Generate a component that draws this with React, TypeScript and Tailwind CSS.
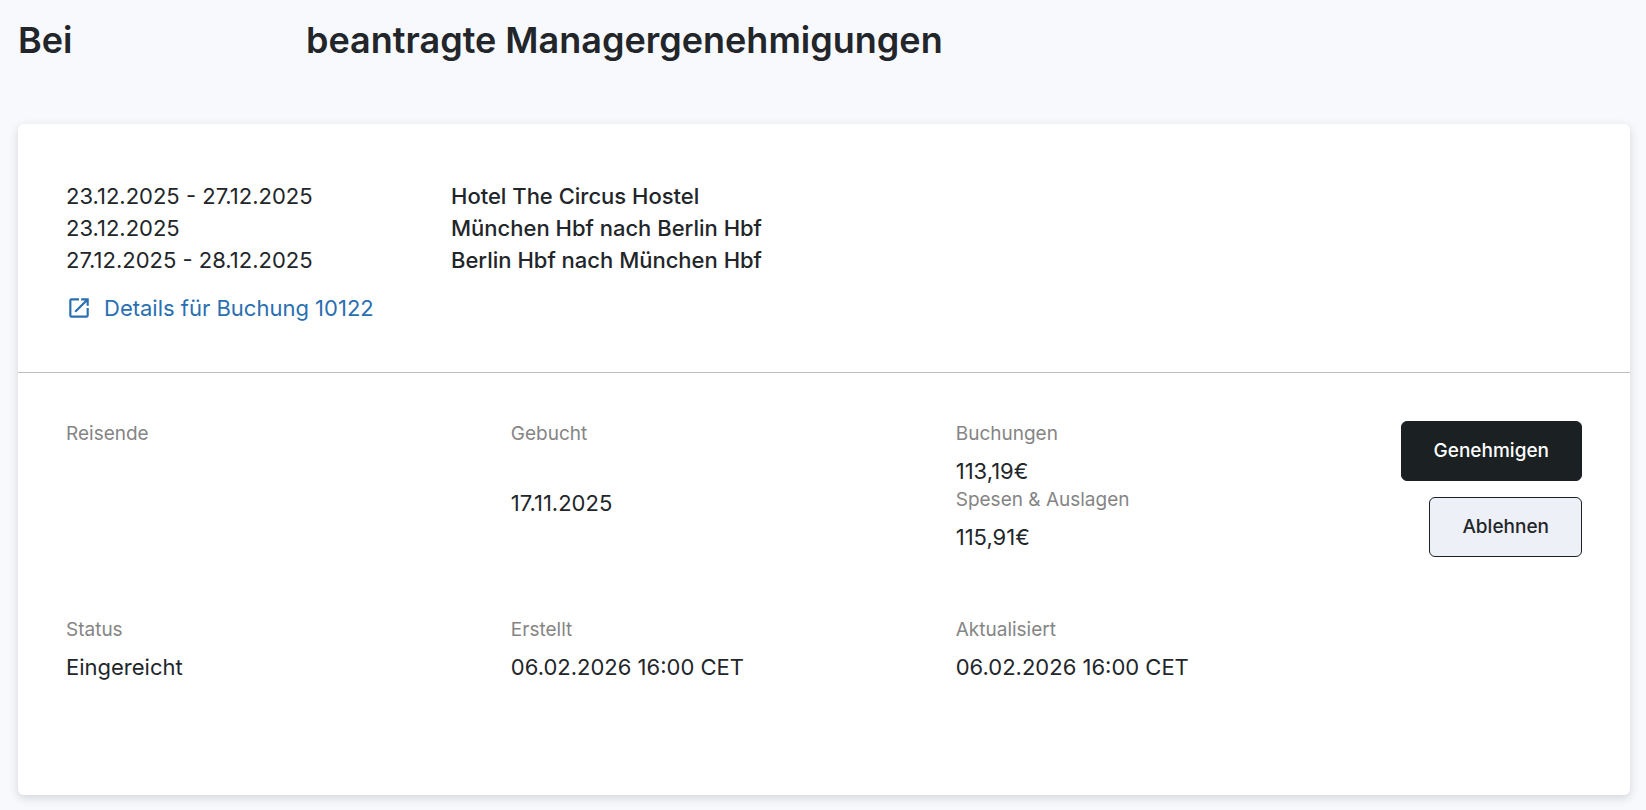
import React from 'react';

interface FieldProps {
  label: string;
  value?: string;
  spaced?: boolean;
}

const segments = [
  { dates: '23.12.2025 - 27.12.2025', title: 'Hotel The Circus Hostel' },
  { dates: '23.12.2025', title: 'München Hbf nach Berlin Hbf' },
  { dates: '27.12.2025 - 28.12.2025', title: 'Berlin Hbf nach München Hbf' },
];

function Field({ label, value, spaced = false }: FieldProps) {
  return (
    <div>
      <dt className="text-[19px] leading-[26px] text-[#858585]">{label}</dt>
      <dd className={spaced ? 'mt-10 text-[22px] leading-8' : 'mt-2 text-[22px] leading-8'}>{value}</dd>
    </div>
  );
}

function OpenIcon() {
  return (
    <svg viewBox="0 0 24 24" className="size-[26px] fill-current" aria-hidden="true">
      <path d="M19 19H5V5h7V3H5a2 2 0 0 0-2 2v14a2 2 0 0 0 2 2h14c1.100 0 2-.900 2-2v-7h-2v7zM14 3v2h3.590l-9.830 9.830 1.410 1.410L19 6.410V10h2V3h-7z" />
    </svg>
  );
}

export default function App() {
  return (
    <main className="min-h-screen bg-[#f8f9fd] py-4 pr-4 pl-[18px] font-['Inter',sans-serif] text-[#22262a]">
      <h1 className="flex h-12 items-center text-[36px] leading-12 font-semibold">
        <span className="w-72">Bei</span>
        <span>beantragte Managergenehmigungen</span>
      </h1>

      <section className="mt-15 rounded-md bg-white shadow-[0_3px_10px_rgba(34,48,56,0.18)]">
        <div className="border-b border-[#bdbdbd] px-12 pt-14 pb-12">
          {segments.map((segment) => (
            <div key={segment.dates} className="grid grid-cols-4 gap-6 text-[22px] leading-8">
              <span>{segment.dates}</span>
              <span className="col-span-3 font-medium">{segment.title}</span>
            </div>
          ))}
          <a href="#" className="mt-4 flex w-fit items-center gap-3 text-[22px] leading-8 text-[#2a6fb0]">
            <OpenIcon />
            Details für Buchung 10122
          </a>
        </div>

        <div className="grid grid-cols-[1fr_1fr_1fr_auto] gap-y-15 px-12 pt-12 pb-28">
          <dl>
            <Field label="Reisende" />
          </dl>
          <dl>
            <Field label="Gebucht" value="17.11.2025" spaced />
          </dl>
          <dl>
            <Field label="Buchungen" value="113,19€" />
            <Field label="Spesen & Auslagen" value="115,91€" />
          </dl>
          <div className="flex flex-col items-end gap-4">
            <button type="button" className="h-15 rounded-md border border-[#1b2023] bg-[#1b2023] px-8 text-[19px] font-medium text-white">
              Genehmigen
            </button>
            <button type="button" className="h-15 rounded-md border border-[#1b2023] bg-[#edf0f6] px-8 text-[19px] font-medium">
              Ablehnen
            </button>
          </div>
          <dl>
            <Field label="Status" value="Eingereicht" />
          </dl>
          <dl>
            <Field label="Erstellt" value="06.02.2026 16:00 CET" />
          </dl>
          <dl>
            <Field label="Aktualisiert" value="06.02.2026 16:00 CET" />
          </dl>
        </div>
      </section>
    </main>
  );
}
